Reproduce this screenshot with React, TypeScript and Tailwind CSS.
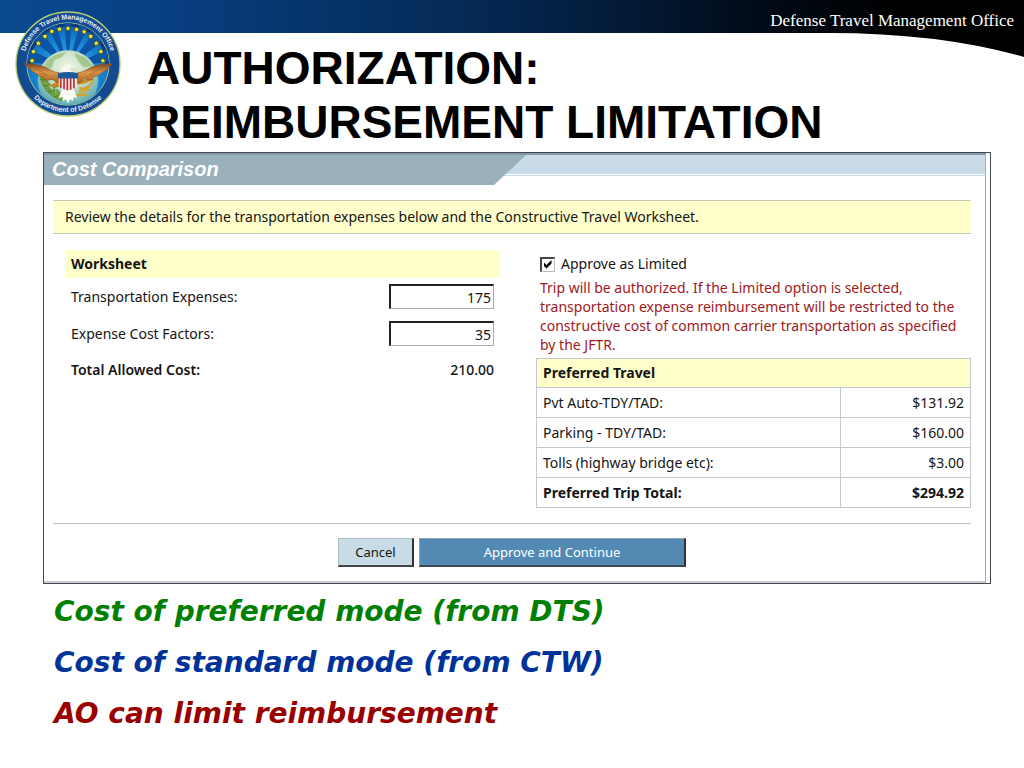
import React, { useState } from "react";

interface Expense {
  label: string;
  amount: string;
}

interface FieldProps {
  id: string;
  label: string;
  defaultValue: string;
}

const expenses: Expense[] = [
  { label: "Pvt Auto-TDY/TAD:", amount: "$131.92" },
  { label: "Parking - TDY/TAD:", amount: "$160.00" },
  { label: "Tolls (highway bridge etc):", amount: "$3.00" },
];

const stars = [
  [97, 180],
  [101, 152],
  [116, 127],
  [136, 106],
  [157, 91],
  [180, 84],
  [206, 82],
  [232, 85],
  [255, 92],
  [275, 106],
  [292, 127],
  [306, 152],
  [312, 180],
];

const Seal: React.FC = () => (
  <svg viewBox="42 26 328 328" className="size-27" role="img" aria-label="Department of Defense seal">
    <defs>
      <radialGradient id="sky" cx="50%" cy="60%" r="60%">
        <stop offset="0" stopColor="#4fb0e4" />
        <stop offset="0.6" stopColor="#1b8ad6" />
        <stop offset="1" stopColor="#0d5fb4" />
      </radialGradient>
      <radialGradient id="globe" cx="50%" cy="30%" r="70%">
        <stop offset="0" stopColor="#f2f6e4" />
        <stop offset="0.5" stopColor="#c0dfc4" />
        <stop offset="1" stopColor="#3c9bb4" />
      </radialGradient>
      <linearGradient id="wing" x1="0" y1="0" x2="0" y2="1">
        <stop offset="0" stopColor="#7d431c" />
        <stop offset="0.45" stopColor="#dc9846" />
        <stop offset="1" stopColor="#a85f20" />
      </linearGradient>
      <clipPath id="sealInner">
        <circle cx="206" cy="190" r="124" />
      </clipPath>
      <path id="sealTop" d="M 79 235 A 135 135 0 1 1 333 235" />
      <path id="sealBottom" d="M 70 245 A 147 147 0 0 0 342 245" />
    </defs>
    <circle cx="206" cy="190" r="158" fill="#134b93" stroke="#b9cf72" strokeWidth="4" />
    <circle cx="206" cy="190" r="125" fill="url(#sky)" stroke="#9fc28a" strokeWidth="3" />
    <g clipPath="url(#sealInner)">
      <path d="M81 190a125 125 0 0 1 250 0" fill="none" stroke="#093a7c" strokeWidth="22" />
      <g fill="#0b54a6">
        <path d="M206 200 60 180 64 135z" />
        <path d="M206 200 80 105 112 72z" />
        <path d="M206 200 136 60 166 52z" />
        <path d="M206 200 194 50 218 50z" />
        <path d="M206 200 246 52 276 60z" />
        <path d="M206 200 300 72 332 105z" />
        <path d="M206 200 348 135 352 180z" />
      </g>
      <circle cx="206" cy="240" r="92" fill="url(#globe)" />
      <path d="M140 184q22-27 60-30l-14 16-22 8-8 24-24 4zM224 156l34 14 24 26-28 4-18-20z" fill="#a5c591" />
      <path d="M118 222q8 58 68 82l8-12q-52-22-60-72z" fill="#6a9b45" />
      <path
        d="M120 236l18 4-8-16 22 12-4-18 20 22M130 256l22-2-12-16M144 274l24-2-10-18 20 4M164 290l20-8-12-16"
        fill="#7ea638"
        stroke="#4c8240"
        strokeWidth="3"
      />
      <path d="M230 288q34-12 54-52M238 274l38-20M240 262l34 8M248 250l28-14M238 286l26-2" fill="none" stroke="#d5a22b" strokeWidth="6" />
      <path d="M142 258l38-18v18zM272 242l-40-8 4 20z" fill="#c98a25" />
    </g>
    <path
      d="M74 189q24 0 44 5 18 4 34 14 14 8 28 9v32q-14-4-22-14-12 8-24 2-2-8-2-8-14 0-22-10-16-6-36-30z"
      fill="url(#wing)"
      stroke="#8a5224"
      strokeWidth="2"
    />
    <path
      d="M340 189q-24 0-44 5-18 4-34 14-14 8-28 9v32q14-4 22-14 12 8 24 2 2-8 2-8 14 0 22-10 16-6 36-30z"
      fill="url(#wing)"
      stroke="#8a5224"
      strokeWidth="2"
    />
    <path
      d="M100 203q22 6 44 20M116 217q18 4 36 14M314 203q-22 6-44 20M298 217q-18 4-36 14"
      fill="none"
      stroke="#b87433"
      strokeWidth="3"
      strokeLinecap="round"
    />
    <path d="M181 222q0-30 26-30 12 0 14 10l13 11-11 1 4 12z" fill="#f4f6f4" />
    <path d="M216 200l17 9-4 7-15-6z" fill="#e0dfb4" />
    <path d="M191 260h30l13 34-10-4-4 12-8-6-5 14-8-13-8 6-2-13-12 4z" fill="#fbfbf5" />
    <path d="M178 230h56v22q-2 16-28 19-26-3-28-19z" fill="#f3e7e1" />
    <path d="M184 231v32M194 231v36M204 231v39M214 231v37M224 231v33" stroke="#b82f3d" strokeWidth="5" />
    <path d="M175 218q31-8 62 0v16h-62z" fill="#1c5a9c" />
    {stars.map(([x, y]) => (
      <path
        key={`${x}-${y}`}
        transform={`translate(${x} ${y})`}
        d="M0-8 3-4 8-3 5 2 6 8 0 5-6 8-5 2-8-3-3-4z"
        fill="#ffee2e"
        stroke="#2f4420"
        strokeWidth="2"
      />
    ))}
    <g fill="#e6eef8" className="font-['Liberation_Sans',sans-serif] text-[21px] font-bold" textAnchor="middle">
      <text>
        <textPath href="#sealTop" startOffset="50%">
          Defense Travel Management Office
        </textPath>
      </text>
      <text>
        <textPath href="#sealBottom" startOffset="50%">
          Department of Defense
        </textPath>
      </text>
    </g>
  </svg>
);

const Banner: React.FC = () => (
  <svg viewBox="0 0 1024 58" preserveAspectRatio="none" className="absolute inset-x-0 top-0 -z-10 h-[58px] w-full" aria-hidden="true">
    <defs>
      <linearGradient id="banner">
        <stop offset="0" stopColor="#0a4a90" />
        <stop offset="0.15" stopColor="#084083" />
        <stop offset="0.5" stopColor="#04264e" />
        <stop offset="0.75" stopColor="#010a16" />
        <stop offset="0.87" stopColor="#000" />
      </linearGradient>
    </defs>
    <path d="M0 0H1024V57Q940 33 830 33H0z" fill="url(#banner)" />
  </svg>
);

const Field: React.FC<FieldProps> = ({ id, label, defaultValue }) => (
  <div className="flex items-center justify-between">
    <label htmlFor={id}>{label}</label>
    <input
      id={id}
      defaultValue={defaultValue}
      className="h-[25px] w-[105px] border-t-2 border-r border-b border-l-2 border-t-[#222] border-r-[#aaa] border-b-[#aaa] border-l-[#222] bg-white px-0.5 text-right"
    />
  </div>
);

const Worksheet: React.FC = () => (
  <section className="flex-1">
    <h3 className="bg-[#ffffcc] px-1.5 py-1 font-bold">Worksheet</h3>
    <div className="flex flex-col gap-3 px-1.5 pt-1.5">
      <Field id="transportation" label="Transportation Expenses:" defaultValue="175" />
      <Field id="factors" label="Expense Cost Factors:" defaultValue="35" />
      <div className="flex justify-between pt-0.5 font-semibold">
        <span>Total Allowed Cost:</span>
        <span className="font-medium">210.00</span>
      </div>
    </div>
  </section>
);

const PreferredTravel: React.FC = () => {
  const [limited, setLimited] = useState(true);

  return (
    <section className="flex-1">
      <div className="flex items-center gap-1.5 px-1 py-1">
        <span className="grid">
          <input
            id="limited"
            type="checkbox"
            checked={limited}
            onChange={(e) => setLimited(e.target.checked)}
            className="peer col-start-1 row-start-1 size-[15px] appearance-none border-t-2 border-r border-b border-l-2 border-t-[#444] border-r-[#bbb] border-b-[#bbb] border-l-[#444] bg-white"
          />
          <svg
            viewBox="0 0 15 15"
            className="pointer-events-none col-start-1 row-start-1 size-[15px] opacity-0 peer-checked:opacity-100"
            aria-hidden="true"
          >
            <path d="M4 5.500 6.500 8 11.500 3V6.500L6.500 11.500 4 9z" fill="#000" />
          </svg>
        </span>
        <label htmlFor="limited">Approve as Limited</label>
      </div>
      <p className="px-1 leading-[19px] text-[#a01820]">
        Trip will be authorized. If the Limited option is selected, transportation expense reimbursement will be
        restricted to the constructive cost of common carrier transportation as specified by the JFTR.
      </p>
      <table className="mt-1 w-full border-collapse border border-[#c3c8cc] text-left">
        <thead>
          <tr className="h-[29px] bg-[#ffffcc]">
            <th colSpan={2} className="px-1.5 font-bold">
              Preferred Travel
            </th>
          </tr>
        </thead>
        <tbody>
          {expenses.map(({ label, amount }) => (
            <tr key={label} className="h-[30px] border border-[#c3c8cc]">
              <td className="px-1.5">{label}</td>
              <td className="w-[30%] border-l border-[#c3c8cc] px-1.5 text-right">{amount}</td>
            </tr>
          ))}
          <tr className="h-[30px] font-bold">
            <td className="px-1.5">Preferred Trip Total:</td>
            <td className="border-l border-[#c3c8cc] px-1.5 text-right">$294.92</td>
          </tr>
        </tbody>
      </table>
    </section>
  );
};

const CostComparison: React.FC = () => (
  <div className="mr-[33px] ml-[43px] border border-[#44474c] pr-1 font-['Noto_Sans',sans-serif] text-sm leading-5 text-[#151515]">
    <div className="border-t-2 border-r border-b-2 border-t-[#8499a3] border-r-[#9fb3bf] border-b-[#c9cdd2]">
      <div className="grid">
        <div className="col-start-1 row-start-1 h-[21px] border-b border-[#cadbe8] bg-[#cadbe8] bg-clip-content pb-px" />
        <h2 className="col-start-1 row-start-1 h-[30px] w-[482px] bg-[#9ab1bc] px-2 font-['Liberation_Sans',sans-serif] text-[20px] leading-[28px] font-bold text-white italic [clip-path:polygon(0_0,100%_0,450px_100%,0_100%)]">
          Cost Comparison
        </h2>
      </div>
      <div className="pt-[15px] pr-3.5 pb-3.5 pl-[9px]">
        <p className="border-y border-[#c8cbb8] bg-[#ffffcc] px-3 py-1.5">
          Review the details for the transportation expenses below and the Constructive Travel Worksheet.
        </p>
        <div className="flex gap-9 border-b border-[#b5c1cb] pt-4 pb-[15px] pl-3">
          <Worksheet />
          <PreferredTravel />
        </div>
        <div className="mt-3.5 flex justify-center gap-[5px] text-[13px]">
          <button className="h-[29px] w-[76px] border-t border-r-2 border-b-2 border-l border-t-[#aeb9be] border-r-[#333] border-b-[#444] border-l-[#aeb9be] bg-[#c8dce7]">
            Cancel
          </button>
          <button className="h-[29px] w-[267px] border-t border-r-2 border-b-2 border-l border-t-[#8fa5b5] border-r-[#333] border-b-[#3c4850] border-l-[#8fa5b5] bg-[#528ab3] text-white">
            Approve and Continue
          </button>
        </div>
      </div>
    </div>
  </div>
);

const App: React.FC = () => (
  <div className="relative isolate min-h-screen bg-white">
    <Banner />
    <header>
      <p className="px-2.5 pt-[9px] text-right font-['Liberation_Serif',serif] text-[17px] leading-6 text-white">
        Defense Travel Management Office
      </p>
      <h1 className="pt-2 pb-[3px] pl-[147px] font-['Liberation_Sans',sans-serif] text-[46px] leading-[54px] font-bold text-black">
        AUTHORIZATION:
        <br />
        REIMBURSEMENT LIMITATION
      </h1>
      <div className="absolute top-2.5 left-3.5">
        <Seal />
      </div>
    </header>
    <CostComparison />
    <div className="flex flex-col gap-[15px] pt-2.5 pl-[54px] font-['DejaVu_Sans',Verdana,sans-serif] text-[28px] leading-9 font-bold italic">
      <p className="text-[#008000]">Cost of preferred mode (from DTS)</p>
      <p className="text-[#003399]">Cost of standard mode (from CTW)</p>
      <p className="text-[#990000]">AO can limit reimbursement</p>
    </div>
  </div>
);

export default App;
